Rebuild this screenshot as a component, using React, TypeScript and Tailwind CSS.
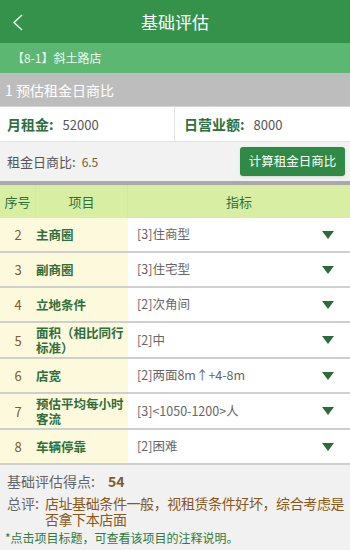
import React from 'react';

const rows = [
  { no: 2, name: '主商圈', value: '[3]住商型' },
  { no: 3, name: '副商圈', value: '[3]住宅型' },
  { no: 4, name: '立地条件', value: '[2]次角间' },
  { no: 5, name: '面积（相比同行标准）', value: '[2]中', tall: true },
  { no: 6, name: '店宽', value: '[2]两面8m↑+4-8m' },
  { no: 7, name: '预估平均每小时客流', value: '[3]<1050-1200>人', tall: true },
  { no: 8, name: '车辆停靠', value: '[2]困难' },
];

function Caret() {
  return (
    <svg width="12" height="8" viewBox="0 0 12 8" className="shrink-0">
      <path d="M0 0 L12 0 L6 8 Z" fill="#2e6b3a" />
    </svg>
  );
}

export default function App() {
  return (
    <div
      className="w-[350px] h-[550px] overflow-hidden bg-[#f1f1f1] flex flex-col leading-none"
      style={{ fontFamily: '"Noto Sans CJK SC", "Noto Sans", sans-serif' }}
    >
      {/* Title bar */}
      <div className="h-[43px] bg-[#34924b] relative flex items-center justify-center shrink-0">
        <svg width="11" height="17" viewBox="0 0 11 17" className="absolute left-[12px] top-[14px]">
          <path d="M10 1 L2 8.5 L10 16" fill="none" stroke="#e8f5ea" strokeWidth="1.5" />
        </svg>
        <span className="text-white text-[17px]">基础评估</span>
      </div>

      {/* Store */}
      <div className="h-[30px] bg-[#5cb772] flex items-center pl-[12px] text-[12px] text-[#eef8ef] shrink-0">
        【8-1】斜土路店
      </div>

      {/* Section title */}
      <div className="h-[34px] bg-[#bdbdbd] flex items-center pl-[5px] text-[14px] text-white shrink-0 border-b border-[#d6d6d6]">
        1 预估租金日商比
      </div>

      {/* Inputs */}
      <div className="h-[35px] bg-white flex shrink-0 border-b border-[#e3e3e3]">
        <div className="w-[175px] flex items-center pl-[7px] border-r border-[#e3e3e3]">
          <span className="text-[14px] font-bold text-[#2f6f3c]">月租金:</span>
          <span className="ml-[9px] text-[13px] text-[#555]">52000</span>
        </div>
        <div className="flex-1 flex items-center pl-[9px]">
          <span className="text-[14px] font-bold text-[#2f6f3c]">日营业额:</span>
          <span className="ml-[9px] text-[13px] text-[#555]">8000</span>
        </div>
      </div>

      {/* Ratio */}
      <div className="h-[39px] bg-[#f2f2f2] flex items-center justify-between pl-[7px] pr-[5px] shrink-0">
        <div className="flex items-center">
          <span className="text-[13px] text-[#555]">租金日商比:</span>
          <span className="ml-[6px] text-[12px] text-[#7a5c30]">6.5</span>
        </div>
        <div className="w-[105px] h-[29px] rounded-[3px] bg-[#2f8a45] flex items-center justify-center text-white text-[12.5px] shadow-sm">
          计算租金日商比
        </div>
      </div>

      <div className="h-[4px] bg-[#a9a9a9] shrink-0" />

      {/* Table header */}
      <div className="h-[33px] bg-[#d8efa3] flex text-[13px] text-[#2f6f3c] shrink-0">
        <div className="w-[36px] flex items-center justify-center border-r border-[#d2eb9a]">序号</div>
        <div className="w-[92px] flex items-center justify-center border-r border-[#d2eb9a]">项目</div>
        <div className="flex-1 flex items-center justify-center">指标</div>
      </div>

      {/* Rows */}
      <div className="flex flex-col shrink-0">
        {rows.map((r) => (
          <div key={r.no} className={`flex border-b-2 border-[#cfcfcf] ${r.tall ? 'h-[36px]' : 'h-[35px]'}`}>
            <div className="w-[128px] bg-[#fdf9dc] flex items-center">
              <span className="w-[36px] text-center text-[13px] text-[#7a5c30]">{r.no}</span>
              <span className="w-[92px] text-[12.5px] leading-[15px] font-bold text-[#2f6f3c]">{r.name}</span>
            </div>
            <div className="flex-1 bg-white flex items-center justify-between pl-[9px] pr-[16px]">
              <span className="text-[12.5px] text-[#666]">{r.value}</span>
              <Caret />
            </div>
          </div>
        ))}
      </div>

      {/* Footer */}
      <div className="flex-1 bg-[#f1f1f1] pl-[7px] pr-[2px] pt-[7px] text-[14px]">
        <div className="flex items-center h-[18px]">
          <span className="text-[#666]">基础评估得点:</span>
          <span className="ml-[13px] font-bold text-[#7a5c30]">54</span>
        </div>
        <div className="flex mt-[5px] leading-[16px]">
          <span className="text-[#666] shrink-0">总评:</span>
          <span className="ml-[6px] tracking-[-0.4px] text-[#8a5716]">店址基础条件一般，视租赁条件好坏，综合考虑是否拿下本店面</span>
        </div>
        <div className="-ml-[2px] mt-[5px] text-[12px] text-[#2f7a3e]">*点击项目标题，可查看该项目的注释说明。</div>
      </div>
    </div>
  );
}
